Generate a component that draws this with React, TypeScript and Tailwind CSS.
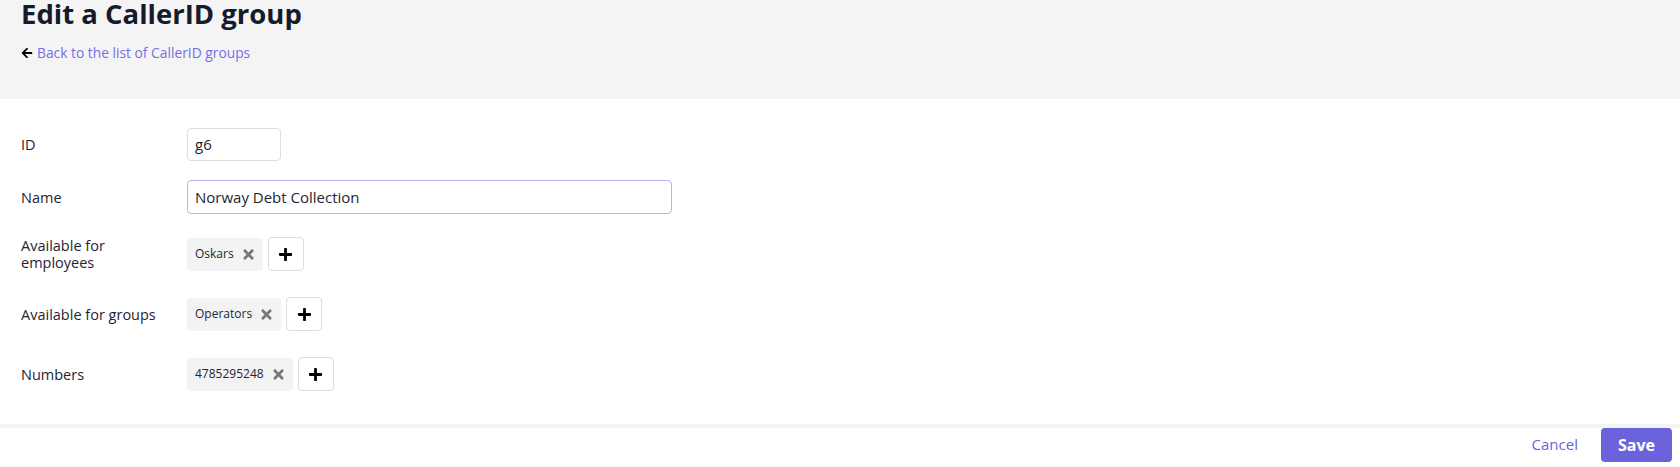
import React from 'react';
import { FaArrowLeft, FaPlus, FaTimes } from 'react-icons/fa';

const font = { fontFamily: '"Open Sans", "Liberation Sans", sans-serif' };

const Chip: React.FC<{ label: string }> = ({ label }) => (
  <div className="flex items-center gap-[7px] h-[33px] pl-[8px] pr-[7px] bg-[#f3f3f3] rounded-[4px]">
    <span className="text-[12px] text-[#23262f]">{label}</span>
    <FaTimes className="text-[#777777] w-[15px] h-[15px]" />
  </div>
);

const AddButton: React.FC = () => (
  <button className="flex items-center justify-center w-[36px] h-[34px] bg-white border border-[#dcdcdc] rounded-[4px]">
    <FaPlus className="text-black w-[15px] h-[15px]" />
  </button>
);

const Row: React.FC<{ label: React.ReactNode; className?: string; children: React.ReactNode }> = ({ label, className, children }) => (
  <div className={`flex items-center ${className ?? ''}`}>
    <div className="w-[187px] pl-[21px] text-[14.5px] leading-[17px] text-[#1f2433]">{label}</div>
    <div className="flex items-center gap-[5px]">{children}</div>
  </div>
);

const App: React.FC = () => {
  return (
    <div className="w-[1680px] h-[467px] bg-white flex flex-col overflow-hidden" style={font}>
      <div className="h-[99px] bg-[#f4f4f4] px-[21px]">
        <h1 className="text-[27.5px] leading-[28px] font-bold text-[#161b2b]">Edit a CallerID group</h1>
        <a href="#" className="mt-[15px] flex items-center gap-[4px] text-[13.8px] leading-[20px] text-[#776ee6]">
          <FaArrowLeft className="text-black w-[12px] h-[12px]" />
          <span>Back to the list of CallerID groups</span>
        </a>
      </div>

      <div className="flex flex-col pt-[29px]">
        <Row label="ID">
          <div className="w-[94px] h-[33px] border border-[#dddddd] rounded-[4px] px-[7px] flex items-center text-[15px] text-[#1f2433]">
            g6
          </div>
        </Row>
        <Row label="Name" className="mt-[19px]">
          <div className="w-[485px] h-[34px] border border-[#b9b3f1] rounded-[4px] px-[7px] flex items-center text-[15px] text-[#1f2433]">
            Norway Debt Collection
          </div>
        </Row>
        <Row label={<>Available for<br />employees</>} className="mt-[23px]">
          <Chip label="Oskars" />
          <AddButton />
        </Row>
        <Row label="Available for groups" className="mt-[26px]">
          <Chip label="Operators" />
          <AddButton />
        </Row>
        <Row label="Numbers" className="mt-[26px]">
          <Chip label="4785295248" />
          <AddButton />
        </Row>
      </div>

      <div className="mt-[33px] h-[4px] bg-[#f4f4f4]" />
      <div className="flex justify-end items-center gap-[23px] pr-[8px]">
        <button className="text-[15px] leading-[20px] font-medium text-[#6c64dd] -mt-[2px]">Cancel</button>
        <button className="h-[34px] px-[17px] rounded-[4px] bg-[#6b63dc] text-white text-[16px] font-bold">Save</button>
      </div>
    </div>
  );
};

export default App;
